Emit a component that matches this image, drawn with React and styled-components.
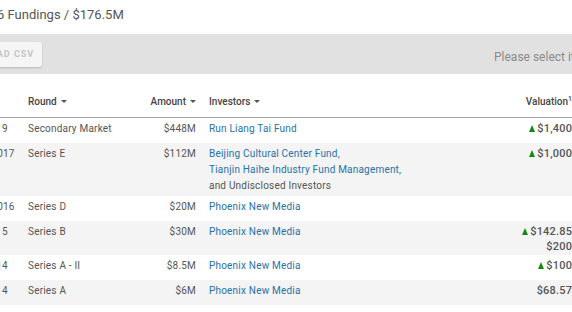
import React from "react";
import styled, { createGlobalStyle } from "styled-components";

const Global = createGlobalStyle`
  html, body { margin: 0; padding: 0; background: #fff; overflow: hidden; }
  body { font-family: Roboto, "Liberation Sans", Arial, sans-serif; }
`;

const Page = styled.div`
  width: 740px;
  margin-left: -60px;
`;

const Title = styled.h2`
  margin: 0;
  box-sizing: border-box;
  height: 34px;
  padding: 6px 0 0 57px;
  font-size: 13px;
  line-height: 18px;
  font-weight: 400;
  color: #555;
`;

const Toolbar = styled.div`
  display: flex;
  align-items: center;
  height: 40px;
  padding-left: 6px;
  background: #e1e1e1;
`;

const CsvButton = styled.button`
  width: 96px;
  height: 25px;
  margin: 0;
  border: none;
  border-radius: 3px;
  background: #f5f5f5;
  box-shadow: 0 1px 2px rgba(0, 0, 0, 0.18);
  font-family: Roboto, "Liberation Sans", Arial, sans-serif;
  font-size: 9px;
  font-weight: 700;
  letter-spacing: 1px;
  color: #c4c4c4;
  padding: 0;
`;

const Hint = styled.span`
  margin-left: 452px;
  margin-top: 5px;
  font-size: 12px;
  color: #8a8a8a;
  white-space: nowrap;
`;

const cols = "82px 108px 72px 268px 118px";

const HeaderRow = styled.div`
  display: grid;
  grid-template-columns: ${cols};
  align-items: end;
  box-sizing: border-box;
  height: 44px;
  border-bottom: 1px solid #a3a3a3;
`;

const HeadCell = styled.div`
  padding: 0 ${(p) => (p.$right ? "6px" : "0")} 7px ${(p) => p.$pad || "6px"};
  text-align: ${(p) => (p.$right ? "right" : "left")};
  font-size: 10px;
  line-height: 16px;
  font-weight: 500;
  color: #444;
  white-space: nowrap;
`;

const Caret = styled.span`
  display: inline-block;
  width: 0;
  height: 0;
  margin-left: 4px;
  vertical-align: 2px;
  border-left: 3px solid transparent;
  border-right: 3px solid transparent;
  border-top: 3px solid #555;
`;

const Sup = styled.sup`
  font-size: 7px;
  line-height: 0;
`;

const Row = styled.div`
  display: grid;
  grid-template-columns: ${cols};
  min-height: 25px;
  background: ${(p) => (p.$striped ? "#f4f4f4" : "#fff")};
`;

const Cell = styled.div`
  padding: 3px ${(p) => (p.$right ? "6px" : "0")} 2px ${(p) => p.$pad || "6px"};
  text-align: ${(p) => (p.$right ? "right" : "left")};
  font-size: 10px;
  line-height: 16px;
  letter-spacing: 0.2px;
  color: #555;
  white-space: nowrap;
`;

const ValueCell = styled.div`
  padding: 4px 6px 1px 0;
  text-align: right;
  font-size: 11px;
  line-height: 14.5px;
  letter-spacing: 0.2px;
  font-weight: 500;
  color: #555;
  white-space: nowrap;
`;

const Up = styled.span`
  display: inline-block;
  width: 0;
  height: 0;
  margin-right: 2px;
  vertical-align: 0px;
  border-left: 3px solid transparent;
  border-right: 3px solid transparent;
  border-bottom: 7px solid #138a13;
`;

const Line = styled.div``;

const Investor = styled.a`
  display: block;
  color: #2771a8;
  text-decoration: none;
`;

const Plain = styled.div`
  color: #555;
`;

const rows = [
  { date: "Jan 8, 2019", round: "Secondary Market", amount: "$448M", investors: ["Run Liang Tai Fund"], val: [{ up: true, v: "$1,400M" }] },
  {
    date: "Nov 22, 2017",
    round: "Series E",
    amount: "$112M",
    investors: ["Beijing Cultural Center Fund,", "Tianjin Haihe Industry Fund Management,"],
    extra: "and Undisclosed Investors",
    val: [{ up: true, v: "$1,000M" }],
  },
  { date: "Aug 16, 2016", round: "Series D", amount: "$20M", investors: ["Phoenix New Media"], val: [] },
  { date: "Jan 5, 2015", round: "Series B", amount: "$30M", investors: ["Phoenix New Media"], val: [{ up: true, v: "$142.85M" }, { v: "$200M" }] },
  { date: "Jun 9, 2014", round: "Series A - II", amount: "$8.5M", investors: ["Phoenix New Media"], val: [{ up: true, v: "$100M" }] },
  { date: "Jan 6, 2014", round: "Series A", amount: "$6M", investors: ["Phoenix New Media"], val: [{ v: "$68.57M" }] },
];

export default function App() {
  return (
    <Page>
      <Global />
      <Title>6 Fundings / $176.5M</Title>
      <Toolbar>
        <CsvButton>DOWNLOAD CSV</CsvButton>
        <Hint>Please select items to download</Hint>
      </Toolbar>
      <HeaderRow>
        <HeadCell $pad="14px">Date<Caret /></HeadCell>
        <HeadCell>Round<Caret /></HeadCell>
        <HeadCell $right $pad="0">Amount<Caret /></HeadCell>
        <HeadCell $pad="7px">Investors<Caret /></HeadCell>
        <HeadCell $right $pad="0">Valuation<Sup>1</Sup><Caret /></HeadCell>
      </HeaderRow>
      {rows.map((r, i) => (
        <Row key={i} $striped={i % 2 === 1}>
          <Cell $pad="14px">{r.date}</Cell>
          <Cell>{r.round}</Cell>
          <Cell $right $pad="0">{r.amount}</Cell>
          <Cell $pad="7px">
            {r.investors.map((n) => (
              <Investor key={n} href="#">{n}</Investor>
            ))}
            {r.extra && <Plain>{r.extra}</Plain>}
          </Cell>
          <ValueCell>
            {r.val.map((v, j) => (
              <Line key={j}>
                {v.up && <Up />}
                {v.v}
              </Line>
            ))}
          </ValueCell>
        </Row>
      ))}
    </Page>
  );
}
